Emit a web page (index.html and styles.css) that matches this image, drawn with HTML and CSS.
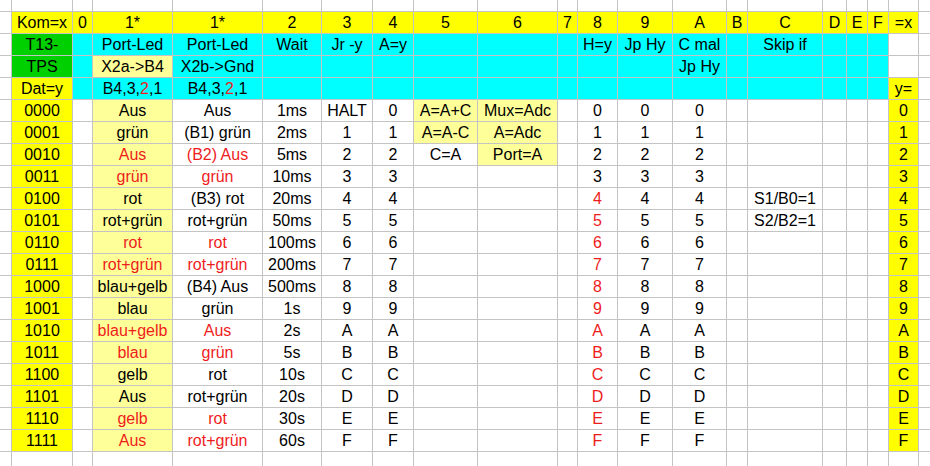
FILE: index.html
```html
<!DOCTYPE html>
<html lang="de">
<head>
<meta charset="utf-8">
<title>T13-TPS Befehlstabelle</title>
<link rel="stylesheet" href="styles.css">
</head>
<body>
<div class="sheet">
<div></div><div></div><div></div><div></div><div></div><div></div><div></div><div></div><div></div><div></div><div></div><div></div><div></div><div></div><div></div><div></div><div></div><div></div><div></div><div></div><div></div>

<div></div><div class="y">Kom=x</div><div class="y">0</div><div class="y">1*</div><div class="y">1*</div><div class="y">2</div><div class="y">3</div><div class="y">4</div><div class="y">5</div><div class="y">6</div><div class="y">7</div><div class="y">8</div><div class="y">9</div><div class="y">A</div><div class="y">B</div><div class="y">C</div><div class="y">D</div><div class="y">E</div><div class="y">F</div><div class="y">=x</div><div></div>

<div></div><div class="g">T13-</div><div class="c"></div><div class="c">Port-Led</div><div class="c">Port-Led</div><div class="c">Wait</div><div class="c">Jr -y</div><div class="c">A=y</div><div class="c"></div><div class="c"></div><div class="c"></div><div class="c">H=y</div><div class="c">Jp Hy</div><div class="c">C mal</div><div class="c"></div><div class="c">Skip if</div><div class="c"></div><div class="c"></div><div class="c"></div><div></div><div></div>

<div></div><div class="g">TPS</div><div class="c"></div><div class="p">X2a-&gt;B4</div><div class="c">X2b-&gt;Gnd</div><div class="c"></div><div class="c"></div><div class="c"></div><div class="c"></div><div class="c"></div><div class="c"></div><div class="c"></div><div class="c"></div><div class="c">Jp Hy</div><div class="c"></div><div class="c"></div><div class="c"></div><div class="c"></div><div class="c"></div><div></div><div></div>

<div></div><div class="y">Dat=y</div><div class="c"></div><div class="c">B4,3,<span class="r">2</span>,1</div><div class="c">B4,3,<span class="r">2</span>,1</div><div class="c"></div><div class="c"></div><div class="c"></div><div class="c"></div><div class="c"></div><div class="c"></div><div class="c"></div><div class="c"></div><div class="c"></div><div class="c"></div><div class="c"></div><div class="c"></div><div class="c"></div><div class="c"></div><div class="y">y=</div><div></div>

<div></div><div class="y">0000</div><div></div><div class="p">Aus</div><div>Aus</div><div>1ms</div><div>HALT</div><div>0</div><div class="p">A=A+C</div><div class="p">Mux=Adc</div><div></div><div>0</div><div>0</div><div>0</div><div></div><div></div><div></div><div></div><div></div><div class="y">0</div><div></div>

<div></div><div class="y">0001</div><div></div><div class="p">grün</div><div>(B1) grün</div><div>2ms</div><div>1</div><div>1</div><div class="p">A=A-C</div><div class="p">A=Adc</div><div></div><div>1</div><div>1</div><div>1</div><div></div><div></div><div></div><div></div><div></div><div class="y">1</div><div></div>

<div></div><div class="y">0010</div><div></div><div class="p r">Aus</div><div class="r">(B2) Aus</div><div>5ms</div><div>2</div><div>2</div><div>C=A</div><div class="p">Port=A</div><div></div><div>2</div><div>2</div><div>2</div><div></div><div></div><div></div><div></div><div></div><div class="y">2</div><div></div>

<div></div><div class="y">0011</div><div></div><div class="p r">grün</div><div class="r">grün</div><div>10ms</div><div>3</div><div>3</div><div></div><div></div><div></div><div>3</div><div>3</div><div>3</div><div></div><div></div><div></div><div></div><div></div><div class="y">3</div><div></div>

<div></div><div class="y">0100</div><div></div><div class="p">rot</div><div>(B3) rot</div><div>20ms</div><div>4</div><div>4</div><div></div><div></div><div></div><div class="r">4</div><div>4</div><div>4</div><div></div><div>S1/B0=1</div><div></div><div></div><div></div><div class="y">4</div><div></div>

<div></div><div class="y">0101</div><div></div><div class="p">rot+grün</div><div>rot+grün</div><div>50ms</div><div>5</div><div>5</div><div></div><div></div><div></div><div class="r">5</div><div>5</div><div>5</div><div></div><div>S2/B2=1</div><div></div><div></div><div></div><div class="y">5</div><div></div>

<div></div><div class="y">0110</div><div></div><div class="p r">rot</div><div class="r">rot</div><div>100ms</div><div>6</div><div>6</div><div></div><div></div><div></div><div class="r">6</div><div>6</div><div>6</div><div></div><div></div><div></div><div></div><div></div><div class="y">6</div><div></div>

<div></div><div class="y">0111</div><div></div><div class="p r">rot+grün</div><div class="r">rot+grün</div><div>200ms</div><div>7</div><div>7</div><div></div><div></div><div></div><div class="r">7</div><div>7</div><div>7</div><div></div><div></div><div></div><div></div><div></div><div class="y">7</div><div></div>

<div></div><div class="y">1000</div><div></div><div class="p">blau+gelb</div><div>(B4) Aus</div><div>500ms</div><div>8</div><div>8</div><div></div><div></div><div></div><div class="r">8</div><div>8</div><div>8</div><div></div><div></div><div></div><div></div><div></div><div class="y">8</div><div></div>

<div></div><div class="y">1001</div><div></div><div class="p">blau</div><div>grün</div><div>1s</div><div>9</div><div>9</div><div></div><div></div><div></div><div class="r">9</div><div>9</div><div>9</div><div></div><div></div><div></div><div></div><div></div><div class="y">9</div><div></div>

<div></div><div class="y">1010</div><div></div><div class="p r">blau+gelb</div><div class="r">Aus</div><div>2s</div><div>A</div><div>A</div><div></div><div></div><div></div><div class="r">A</div><div>A</div><div>A</div><div></div><div></div><div></div><div></div><div></div><div class="y">A</div><div></div>

<div></div><div class="y">1011</div><div></div><div class="p r">blau</div><div class="r">grün</div><div>5s</div><div>B</div><div>B</div><div></div><div></div><div></div><div class="r">B</div><div>B</div><div>B</div><div></div><div></div><div></div><div></div><div></div><div class="y">B</div><div></div>

<div></div><div class="y">1100</div><div></div><div class="p">gelb</div><div>rot</div><div>10s</div><div>C</div><div>C</div><div></div><div></div><div></div><div class="r">C</div><div>C</div><div>C</div><div></div><div></div><div></div><div></div><div></div><div class="y">C</div><div></div>

<div></div><div class="y">1101</div><div></div><div class="p">Aus</div><div>rot+grün</div><div>20s</div><div>D</div><div>D</div><div></div><div></div><div></div><div class="r">D</div><div>D</div><div>D</div><div></div><div></div><div></div><div></div><div></div><div class="y">D</div><div></div>

<div></div><div class="y">1110</div><div></div><div class="p r">gelb</div><div class="r">rot</div><div>30s</div><div>E</div><div>E</div><div></div><div></div><div></div><div class="r">E</div><div>E</div><div>E</div><div></div><div></div><div></div><div></div><div></div><div class="y">E</div><div></div>

<div></div><div class="y">1111</div><div></div><div class="p r">Aus</div><div class="r">rot+grün</div><div>60s</div><div>F</div><div>F</div><div></div><div></div><div></div><div class="r">F</div><div>F</div><div>F</div><div></div><div></div><div></div><div></div><div></div><div class="y">F</div><div></div>

<div></div><div></div><div></div><div></div><div></div><div></div><div></div><div></div><div></div><div></div><div></div><div></div><div></div><div></div><div></div><div></div><div></div><div></div><div></div><div></div><div></div>
</div>
</body>
</html>
```

FILE: styles.css
```css
html, body {
  margin: 0;
  padding: 0;
  background: #ffffff;
}

.sheet {
  width: 930px;
  height: 466px;
  overflow: hidden;
  display: grid;
  grid-template-columns: 11px 60px 19px 79px 89px 58px 50px 40px 63px 79px 19px 39px 54px 53px 20px 74px 23px 20px 20px 29px 1fr;
  grid-template-rows: 11px repeat(20, 21px) 1fr;
  gap: 1px;
  background: #c4c4c4;
  font-family: "Liberation Sans", Arial, sans-serif;
  font-size: 16px;
  line-height: 21px;
  color: #000000;
}

.sheet > div {
  background: #ffffff;
  text-align: center;
  white-space: nowrap;
  overflow: hidden;
}

.sheet > .y { background: #ffff00; }
.sheet > .c { background: #00ffff; }
.sheet > .g { background: #00d000; }
.sheet > .p { background: #ffff99; }

.r { color: #ee1c1c; }
```
